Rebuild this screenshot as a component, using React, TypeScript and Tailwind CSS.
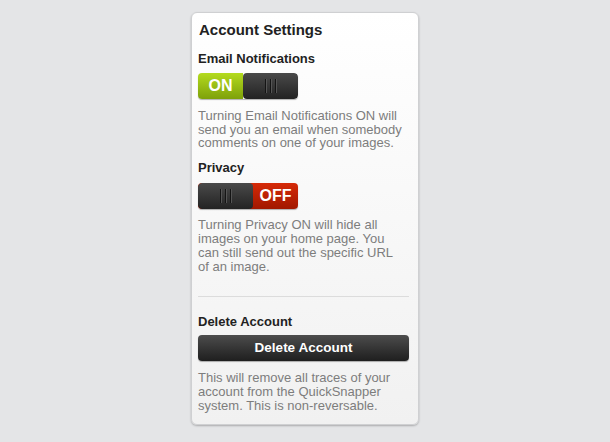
export default function App() {
  return (
    <div
      className="min-h-[442px] w-full bg-[#e4e5e7] flex justify-center pt-[12px]"
      style={{ fontFamily: '"Liberation Sans", Arial, sans-serif' }}
    >
      <div className="w-[228px] h-[413px] rounded-[6px] border border-[#cfd0d2] bg-gradient-to-b from-white to-[#f1f1f1] shadow-[0_1px_2px_rgba(0,0,0,0.25)] pl-[6px] pr-[9px] pt-[7px]">
        <h1 className="text-[15px] font-bold text-[#222] leading-[20px] pl-[1px]">Account Settings</h1>

        <h2 className="mt-[11px] text-[13px] font-bold text-[#222] leading-[16px]">Email Notifications</h2>
        <div className="mt-[6px] flex w-[100px] h-[26px] rounded-[4px] overflow-hidden shadow-[0_1px_1px_rgba(0,0,0,0.3)]">
          <div className="w-[45px] bg-gradient-to-b from-[#b4db1e] to-[#7ea10a] flex items-center justify-center text-white font-bold text-[16px]">
            ON
          </div>
          <div className="flex-1 rounded-[4px] bg-gradient-to-b from-[#4a4a4a] to-[#232323] flex items-center justify-center gap-[4px]">
            <span className="w-[1px] h-[14px] bg-[#141414] shadow-[1px_0_0_#555]" />
            <span className="w-[1px] h-[14px] bg-[#141414] shadow-[1px_0_0_#555]" />
            <span className="w-[1px] h-[14px] bg-[#141414] shadow-[1px_0_0_#555]" />
          </div>
        </div>
        <p className="mt-[10px] text-[13px] leading-[13.5px] text-[#7d7d7d]">
          Turning Email Notifications ON will send you an email when somebody comments on one of your images.
        </p>

        <h2 className="mt-[10px] text-[13px] font-bold text-[#222] leading-[16px]">Privacy</h2>
        <div className="mt-[7px] flex w-[100px] h-[26px] rounded-[4px] overflow-hidden shadow-[0_1px_1px_rgba(0,0,0,0.3)] bg-gradient-to-b from-[#d62a08] to-[#a11800]">
          <div className="w-[55px] rounded-[4px] bg-gradient-to-b from-[#4a4a4a] to-[#232323] flex items-center justify-center gap-[4px]">
            <span className="w-[1px] h-[14px] bg-[#141414] shadow-[1px_0_0_#555]" />
            <span className="w-[1px] h-[14px] bg-[#141414] shadow-[1px_0_0_#555]" />
            <span className="w-[1px] h-[14px] bg-[#141414] shadow-[1px_0_0_#555]" />
          </div>
          <div className="flex-1 flex items-center justify-center text-white font-bold text-[16px]">OFF</div>
        </div>
        <p className="mt-[9px] text-[13px] leading-[14.2px] text-[#7d7d7d] pr-[4px]">
          Turning Privacy ON will hide all images on your home page. You can still send out the specific URL of an image.
        </p>

        <div className="mt-[22px] h-px bg-[#dcdcdc]" />

        <h2 className="mt-[17px] text-[13px] font-bold text-[#222] leading-[16px]">Delete Account</h2>
        <button className="mt-[5px] w-full h-[26px] rounded-[4px] bg-gradient-to-b from-[#4d4d4d] to-[#1f1f1f] text-white font-bold text-[13.5px] shadow-[0_1px_1px_rgba(0,0,0,0.3)]">
          Delete Account
        </button>
        <p className="mt-[10px] text-[13px] leading-[13.7px] text-[#7d7d7d]">
          This will remove all traces of your account from the QuickSnapper system. This is non-reversable.
        </p>
      </div>
    </div>
  );
}
